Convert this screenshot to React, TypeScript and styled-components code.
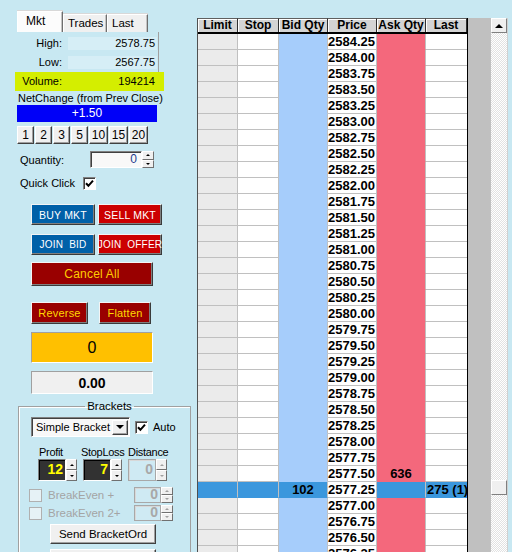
import React from 'react';
import styled, { createGlobalStyle, css } from 'styled-components';

const PAGE = '#c8e8f2';

const GlobalStyle = createGlobalStyle`
  html, body { margin: 0; padding: 0; background: ${PAGE}; }
  body { font-family: "Liberation Sans", Arial, sans-serif; }
  * { box-sizing: border-box; }
`;

const Screen = styled.div`
  width: 512px;
  height: 552px;
  overflow: hidden;
  display: flex;
  background: ${PAGE};
  color: #000;
`;

/* ---------- left panel ---------- */

const LeftPanel = styled.div`
  width: 197px;
  flex: none;
  display: flex;
  flex-direction: column;
  padding-top: 11px;
  font-size: 11px;
  & > * {
    flex-shrink: 0;
  }
`;

const TabStrip = styled.div`
  display: flex;
  align-items: flex-end;
  margin-left: 17px;
  height: 21px;
`;

const Tab = styled.div<{ $active?: boolean; $w: number }>`
  width: ${p => p.$w}px;
  height: ${p => (p.$active ? 21 : 18)}px;
  background: ${p => (p.$active ? '#fcfcfc' : '#f0f0f0')};
  border-top: 1px solid #fff;
  border-left: 1px solid #fff;
  border-right: 1px solid #6e6e6e;
  box-shadow: inset -1px 0 0 #c4c4c4, 0 -1px 0 #d8d8d8;
  padding: ${p => (p.$active ? '3px 0 0 8px' : '2px 0 0 4px')};
  font-size: ${p => (p.$active ? 12 : 11.5)}px;
  line-height: 13px;
`;

const InfoPanel = styled.div`
  margin-left: 15px;
  width: 144px;
  border-right: 1px solid #a0a0a0;
  padding-top: 2px;
  display: flex;
  flex-direction: column;
`;

const InfoRow = styled.div<{ $hl?: boolean }>`
  display: grid;
  grid-template-columns: 48px 89px;
  column-gap: 5px;
  align-items: center;
  height: 19px;
  flex: none;
  ${p =>
    p.$hl &&
    css`
      background: #d4ee00;
      margin-right: -6px;
    `}
`;

const InfoLabel = styled.div`
  text-align: right;
  padding-right: 1px;
  line-height: 13px;
`;

const InfoValue = styled.div<{ $hl?: boolean }>`
  height: 13px;
  line-height: 13px;
  text-align: right;
  padding-right: 2px;
  background: ${p => (p.$hl ? 'transparent' : '#d6eef6')};
`;

const PlainLabel = styled.div<{ $ml: number }>`
  margin-left: ${p => p.$ml}px;
  height: 14px;
  line-height: 14px;
  white-space: nowrap;
`;

const NetBar = styled.div`
  margin-left: 17px;
  width: 140px;
  height: 17px;
  background: #0000f8;
  color: #fff;
  font-size: 12px;
  line-height: 17px;
  text-align: center;
`;

const QtyButtons = styled.div`
  display: flex;
  gap: 1px;
  margin: 4px 0 0 17px;
  height: 18px;
`;

const ClassicButton = styled.div<{ $w: number; $h: number }>`
  width: ${p => p.$w}px;
  height: ${p => p.$h}px;
  flex: none;
  background: #f0f0f0;
  border: 1px solid;
  border-color: #fff #404040 #404040 #fff;
  box-shadow: inset -1px -1px 0 #a0a0a0;
  display: flex;
  align-items: center;
  justify-content: center;
  font-size: 12px;
  color: #000;
`;

const FieldRow = styled.div<{ $mt: number; $h: number }>`
  display: flex;
  align-items: center;
  margin-top: ${p => p.$mt}px;
  height: ${p => p.$h}px;
`;

const RowLabel = styled.div<{ $ml: number; $w: number }>`
  margin-left: ${p => p.$ml}px;
  width: ${p => p.$w}px;
  line-height: 14px;
  white-space: nowrap;
`;

const TextBox = styled.div<{ $w: number; $h: number }>`
  width: ${p => p.$w}px;
  height: ${p => p.$h}px;
  background: #f8f8f8;
  border: 1px solid;
  border-color: #808080 #fff #fff #808080;
  box-shadow: inset 1px 1px 0 #404040;
  text-align: right;
  padding-right: 4px;
  font-size: 12px;
  line-height: 15px;
  color: #1c3c8c;
`;

const Spinner = styled.div<{ $w: number; $h: number }>`
  width: ${p => p.$w}px;
  height: ${p => p.$h}px;
  display: flex;
  flex-direction: column;
  flex: none;
`;

const SpinBtn = styled.div`
  flex: 1;
  background: #f0f0f0;
  border: 1px solid;
  border-color: #fff #707070 #707070 #fff;
  display: flex;
  align-items: center;
  justify-content: center;
`;

const Tri = styled.span<{ $dir: 'up' | 'down'; $s: number; $c?: string }>`
  width: 0;
  height: 0;
  border-left: ${p => p.$s}px solid transparent;
  border-right: ${p => p.$s}px solid transparent;
  ${p =>
    p.$dir === 'up'
      ? css`border-bottom: ${Math.ceil(p.$s / 1.3)}px solid ${p.$c || '#000'};`
      : css`border-top: ${Math.ceil(p.$s / 1.3)}px solid ${p.$c || '#000'};`}
`;

const CheckBox = styled.div<{ $disabled?: boolean }>`
  width: 13px;
  height: 13px;
  flex: none;
  background: ${p => (p.$disabled ? '#e6f2f6' : '#fff')};
  border: 1px solid;
  border-color: ${p => (p.$disabled ? '#b0b0b0' : '#808080 #fff #fff #808080')};
  box-shadow: ${p => (p.$disabled ? 'none' : 'inset 1px 1px 0 #404040')};
  display: flex;
  align-items: center;
  justify-content: center;
`;

const ButtonRow = styled.div<{ $mt: number; $gap: number }>`
  display: flex;
  gap: ${p => p.$gap}px;
  margin: ${p => p.$mt}px 0 0 31px;
`;

const ActionButton = styled.div<{ $bg: string; $fg: string; $w: number; $h: number; $fs: number }>`
  width: ${p => p.$w}px;
  height: ${p => p.$h}px;
  flex: none;
  background: ${p => p.$bg};
  color: ${p => p.$fg};
  font-size: ${p => p.$fs}px;
  border: 1px solid;
  border-color: #f4f4f4 #3a3a3a #3a3a3a #f4f4f4;
  box-shadow: inset -1px -1px 0 #808080;
  display: flex;
  align-items: center;
  justify-content: center;
  white-space: pre;
  letter-spacing: 0.2px;
`;

const PositionBox = styled.div<{ $bg: string; $h: number; $mt: number }>`
  margin: ${p => p.$mt}px 0 0 31px;
  width: 122px;
  height: ${p => p.$h}px;
  background: ${p => p.$bg};
  border-top: 1px solid #a0a0a0;
  border-left: 1px solid #a0a0a0;
  border-bottom: 1px solid #fff;
  border-right: 1px solid #fff;
  display: flex;
  align-items: center;
  justify-content: center;
`;

const PosQty = styled.span`
  font-size: 16px;
`;

const PosPnl = styled.span`
  font-size: 14px;
  font-weight: bold;
`;

/* ---------- brackets group ---------- */

const GroupBox = styled.fieldset`
  margin: 5px 0 0 18px;
  width: 173px;
  height: 200px;
  border: 1px solid #a0a0a0;
  box-shadow: 1px 1px 0 #fff inset;
  padding: 4px 0 0 10px;
  min-width: 0;
`;

const GroupTitle = styled.legend`
  margin: 0 auto;
  padding: 0 2px;
  font-size: 11.5px;
  line-height: 14px;
`;

const BracketTop = styled.div`
  display: flex;
  align-items: center;
  height: 20px;
  margin-left: 2px;
  gap: 5px;
  font-size: 11px;
`;

const Select = styled.div`
  width: 99px;
  height: 20px;
  flex: none;
  background: #f8f8f8;
  border: 1px solid;
  border-color: #808080 #fff #fff #808080;
  box-shadow: inset 1px 1px 0 #404040;
  display: flex;
  align-items: center;
  justify-content: space-between;
  padding: 0 1px 0 4px;
  font-size: 11px;
  white-space: nowrap;
`;

const SelectArrow = styled.div`
  width: 16px;
  height: 15px;
  flex: none;
  background: #f0f0f0;
  border: 1px solid;
  border-color: #fff #404040 #404040 #fff;
  box-shadow: inset -1px -1px 0 #a0a0a0;
  display: flex;
  align-items: center;
  justify-content: center;
`;

const ParamGrid = styled.div`
  display: grid;
  grid-template-columns: 43px 47px 40px;
  grid-template-rows: 14px 22px;
  margin: 8px 0 0 9px;
  font-size: 11px;
`;

const ParamLabel = styled.div<{ $ml?: number }>`
  margin-left: ${p => p.$ml ?? 0}px;
  line-height: 14px;
  white-space: nowrap;
  letter-spacing: -0.3px;
`;

const SpinField = styled.div<{ $ml?: number }>`
  display: flex;
  margin-left: ${p => p.$ml ?? 0}px;
`;

const NumBox = styled.div<{ $w: number; $h: number; $dark?: boolean }>`
  width: ${p => p.$w}px;
  height: ${p => p.$h}px;
  flex: none;
  text-align: right;
  padding-right: 2px;
  font-weight: bold;
  font-size: 14px;
  line-height: ${p => p.$h - 3}px;
  ${p =>
    p.$dark
      ? css`
          background: #323232;
          color: #ffff00;
          border: 1px solid;
          border-color: #808080 #fff #fff #808080;
          box-shadow: inset 1px 1px 0 #000;
        `
      : css`
          background: #cfeaf3;
          color: #a8a8a8;
          border: 1px solid #a8a8a8;
          box-shadow: inset 1px 1px 0 #d8d8d8;
        `}
`;

const BreakRow = styled.div<{ $mt: number }>`
  display: flex;
  align-items: center;
  height: 16px;
  margin-top: ${p => p.$mt}px;
`;

const DisabledLabel = styled.div`
  margin-left: 6px;
  width: 86px;
  color: #a4a4a4;
  font-size: 11.5px;
  white-space: nowrap;
`;

const BracketButton = styled(ClassicButton)<{ $mt: number }>`
  margin: ${p => p.$mt}px 0 0 21px;
  font-size: 11.5px;
`;

/* ---------- ladder ---------- */

const COLS = '40px 41px 49px 49px 49px 41px';

const Board = styled.div`
  display: flex;
  margin-top: 18px;
  height: 534px;
  flex: none;
`;

const Ladder = styled.div`
  width: 270px;
  border-left: 1px solid #505050;
  display: flex;
  flex-direction: column;
  background: #fff;
`;

const HeaderRow = styled.div`
  display: grid;
  grid-template-columns: ${COLS};
  height: 16px;
  border-bottom: 2px solid #000;
  flex: none;
`;

const HeaderCell = styled.div`
  background: #d4d4d4;
  border-top: 1px solid #606060;
  border-right: 1px solid #303030;
  box-shadow: inset 1px 1px 0 #fff;
  font-weight: bold;
  font-size: 12px;
  line-height: 13px;
  text-align: center;
  white-space: nowrap;
  overflow: hidden;
`;

const DataRow = styled.div`
  display: grid;
  grid-template-columns: ${COLS};
  height: 16px;
  flex: none;
`;

type Kind = 'limit' | 'stop' | 'bid' | 'price' | 'ask' | 'last';

const BG: Record<Kind, string> = {
  limit: '#ebebeb',
  stop: '#ffffff',
  bid: '#a6cdfb',
  price: '#ffffff',
  ask: '#f4687c',
  last: '#ffffff',
};

const HL = '#3b97dd';

const Cell = styled.div<{ $kind: Kind; $hl?: boolean }>`
  background: ${p => (p.$hl && p.$kind !== 'price' ? HL : BG[p.$kind])};
  border-right: 1px solid #c0c0c0;
  border-bottom: 1px solid
    ${p =>
      p.$hl && p.$kind !== 'price'
        ? HL
        : p.$kind === 'bid' || p.$kind === 'ask'
        ? BG[p.$kind]
        : '#c0c0c0'};
  font-weight: bold;
  font-size: 13px;
  line-height: 15px;
  white-space: nowrap;
  overflow: hidden;
  text-align: ${p => (p.$kind === 'price' ? 'right' : p.$kind === 'last' ? 'left' : 'center')};
  padding: ${p => (p.$kind === 'price' ? '0 1px 0 0' : p.$kind === 'last' ? '0 0 0 1px' : '0')};
  ${p => p.$kind === 'last' && css`border-right: none;`}
`;

const Gutter = styled.div`
  width: 24px;
  background: #c0c0c0;
  border-left: 1px solid #000;
`;

const ScrollTrack = styled.div`
  width: 17px;
  display: flex;
  flex-direction: column;
  background: repeating-conic-gradient(#ffffff 0 25%, #e2e2e2 0 50%) 0 0 / 2px 2px;
  border-right: 1px solid #d0d0d0;
`;

const ScrollBtn = styled.div<{ $mt?: number }>`
  width: 16px;
  height: 15px;
  flex: none;
  margin-top: ${p => p.$mt ?? 0}px;
  background: #f0f0f0;
  border: 1px solid;
  border-color: #fff #808080 #808080 #fff;
  display: flex;
  align-items: center;
  justify-content: center;
`;

const Check = () => (
  <svg width="9" height="9" viewBox="0 0 9 9">
    <path d="M1 4.2 L3.4 6.8 L8 1.6" stroke="#000" strokeWidth="2" fill="none" />
  </svg>
);

const SmallSpinner = ({ w, h, disabled }: { w: number; h: number; disabled?: boolean }) => (
  <Spinner $w={w} $h={h}>
    <SpinBtn>
      <Tri $dir="up" $s={2} $c={disabled ? '#a0a0a0' : '#000'} />
    </SpinBtn>
    <SpinBtn>
      <Tri $dir="down" $s={2} $c={disabled ? '#a0a0a0' : '#000'} />
    </SpinBtn>
  </Spinner>
);

const prices = Array.from({ length: 33 }, (_, i) => (2584.25 - i * 0.25).toFixed(2));
const HL_ROW = 28;
const ASK_ROW = 27;

export default function App() {
  return (
    <>
      <GlobalStyle />
      <Screen>
        <LeftPanel>
          <TabStrip>
            <Tab $active $w={46}>Mkt</Tab>
            <Tab $w={44}>Trades</Tab>
            <Tab $w={41}>Last</Tab>
          </TabStrip>
          <InfoPanel>
            <InfoRow>
              <InfoLabel>High:</InfoLabel>
              <InfoValue>2578.75</InfoValue>
            </InfoRow>
            <InfoRow>
              <InfoLabel>Low:</InfoLabel>
              <InfoValue>2567.75</InfoValue>
            </InfoRow>
            <InfoRow $hl>
              <InfoLabel>Volume:</InfoLabel>
              <InfoValue $hl>194214</InfoValue>
            </InfoRow>
          </InfoPanel>
          <PlainLabel $ml={18}>NetChange (from Prev Close)</PlainLabel>
          <NetBar>+1.50</NetBar>
          <QtyButtons>
            {['1', '2', '3', '5', '10', '15', '20'].map(n => (
              <ClassicButton key={n} $w={n.length > 1 ? 19 : 17} $h={18}>
                {n}
              </ClassicButton>
            ))}
          </QtyButtons>
          <FieldRow $mt={7} $h={17}>
            <RowLabel $ml={20} $w={70}>Quantity:</RowLabel>
            <TextBox $w={52} $h={17}>0</TextBox>
            <SmallSpinner w={12} h={17} />
          </FieldRow>
          <FieldRow $mt={8} $h={14}>
            <RowLabel $ml={20} $w={63}>Quick Click</RowLabel>
            <CheckBox>
              <Check />
            </CheckBox>
          </FieldRow>
          <ButtonRow $mt={14} $gap={3}>
            <ActionButton $bg="#0060a8" $fg="#fff" $w={64} $h={21} $fs={10.5}>BUY MKT</ActionButton>
            <ActionButton $bg="#cc0000" $fg="#fff" $w={64} $h={21} $fs={10.5}>SELL MKT</ActionButton>
          </ButtonRow>
          <ButtonRow $mt={9} $gap={3}>
            <ActionButton $bg="#0060a8" $fg="#fff" $w={64} $h={21} $fs={10}>{'JOIN  BID'}</ActionButton>
            <ActionButton $bg="#cc0000" $fg="#fff" $w={64} $h={21} $fs={10}>{'JOIN  OFFER'}</ActionButton>
          </ButtonRow>
          <ButtonRow $mt={7} $gap={0}>
            <ActionButton $bg="#990000" $fg="#ffcc00" $w={122} $h={24} $fs={12}>Cancel All</ActionButton>
          </ButtonRow>
          <ButtonRow $mt={16} $gap={11}>
            <ActionButton $bg="#990000" $fg="#ffd800" $w={57} $h={22} $fs={11}>Reverse</ActionButton>
            <ActionButton $bg="#990000" $fg="#ffd800" $w={52} $h={22} $fs={11}>Flatten</ActionButton>
          </ButtonRow>
          <PositionBox $bg="#ffc000" $h={31} $mt={8}>
            <PosQty>0</PosQty>
          </PositionBox>
          <PositionBox $bg="#f0f0f0" $h={23} $mt={8}>
            <PosPnl>0.00</PosPnl>
          </PositionBox>
          <GroupBox>
            <GroupTitle>Brackets</GroupTitle>
            <BracketTop>
              <Select>
                <span>Simple Bracket</span>
                <SelectArrow>
                  <Tri $dir="down" $s={4} />
                </SelectArrow>
              </Select>
              <CheckBox>
                <Check />
              </CheckBox>
              <span>Auto</span>
            </BracketTop>
            <ParamGrid>
              <ParamLabel $ml={1}>Profit</ParamLabel>
              <ParamLabel>StopLoss</ParamLabel>
              <ParamLabel>Distance</ParamLabel>
              <SpinField>
                <NumBox $dark $w={28} $h={22}>12</NumBox>
                <SmallSpinner w={11} h={22} />
              </SpinField>
              <SpinField $ml={2}>
                <NumBox $dark $w={28} $h={22}>7</NumBox>
                <SmallSpinner w={11} h={22} />
              </SpinField>
              <SpinField>
                <NumBox $w={28} $h={22}>0</NumBox>
                <SmallSpinner w={11} h={22} disabled />
              </SpinField>
            </ParamGrid>
            <BreakRow $mt={6}>
              <CheckBox $disabled />
              <DisabledLabel>BreakEven +</DisabledLabel>
              <SpinField>
                <NumBox $w={27} $h={16}>0</NumBox>
                <SmallSpinner w={12} h={16} disabled />
              </SpinField>
            </BreakRow>
            <BreakRow $mt={2}>
              <CheckBox $disabled />
              <DisabledLabel>BreakEven 2+</DisabledLabel>
              <SpinField>
                <NumBox $w={27} $h={16}>0</NumBox>
                <SmallSpinner w={12} h={16} disabled />
              </SpinField>
            </BreakRow>
            <BracketButton $mt={3} $w={106} $h={20}>Send BracketOrd</BracketButton>
            <BracketButton $mt={5} $w={106} $h={20} />
          </GroupBox>
        </LeftPanel>

        <Board>
          <Ladder>
            <HeaderRow>
              {['Limit', 'Stop', 'Bid Qty', 'Price', 'Ask Qty', 'Last'].map(h => (
                <HeaderCell key={h}>{h}</HeaderCell>
              ))}
            </HeaderRow>
            {prices.map((p, i) => {
              const hl = i === HL_ROW;
              return (
                <DataRow key={p}>
                  <Cell $kind="limit" $hl={hl} />
                  <Cell $kind="stop" $hl={hl} />
                  <Cell $kind="bid" $hl={hl}>{hl ? '102' : ''}</Cell>
                  <Cell $kind="price" $hl={hl}>{p}</Cell>
                  <Cell $kind="ask" $hl={hl}>{i === ASK_ROW ? '636' : ''}</Cell>
                  <Cell $kind="last" $hl={hl}>{hl ? '275 (1)' : ''}</Cell>
                </DataRow>
              );
            })}
          </Ladder>
          <Gutter />
          <ScrollTrack>
            <ScrollBtn>
              <Tri $dir="up" $s={4} />
            </ScrollBtn>
            <ScrollBtn $mt={447} />
          </ScrollTrack>
        </Board>
      </Screen>
    </>
  );
}
